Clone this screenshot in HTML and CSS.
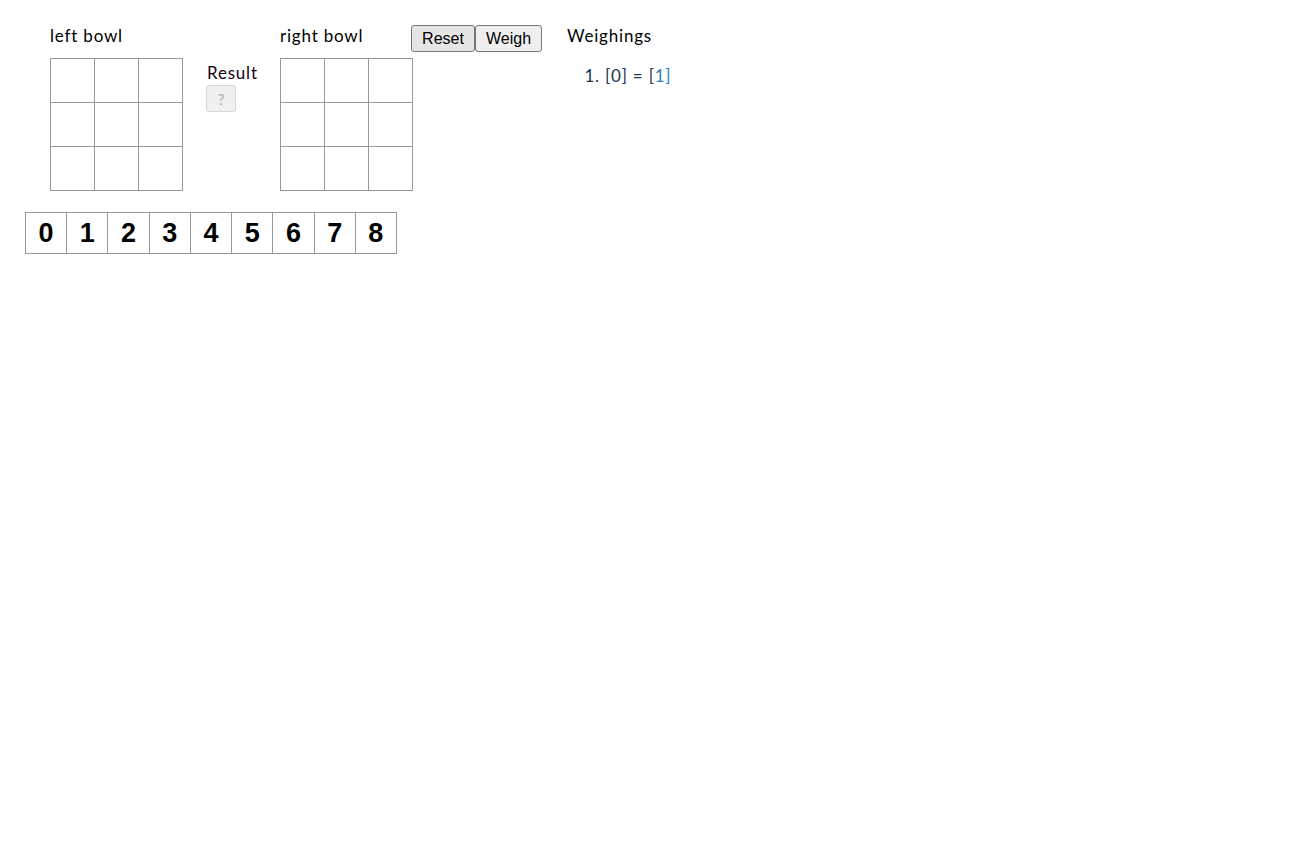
FILE: index.html
```html
<!DOCTYPE html>
<html>
<head>
<meta charset="utf-8">
<link rel="stylesheet" href="styles.css">
</head>
<body>
<div class="page">
  <div class="top">
    <div class="bowl">
      <div class="label">left bowl</div>
      <div class="grid">
        <div class="cell"></div><div class="cell"></div><div class="cell"></div>
        <div class="cell"></div><div class="cell"></div><div class="cell"></div>
        <div class="cell"></div><div class="cell"></div><div class="cell"></div>
      </div>
    </div>
    <div class="result">
      <div class="result-label">Result</div>
      <button class="qbtn" disabled>?</button>
    </div>
    <div class="bowl">
      <div class="label">right bowl</div>
      <div class="grid">
        <div class="cell"></div><div class="cell"></div><div class="cell"></div>
        <div class="cell"></div><div class="cell"></div><div class="cell"></div>
        <div class="cell"></div><div class="cell"></div><div class="cell"></div>
      </div>
    </div>
    <div class="buttons">
      <button class="btn btn-active">Reset</button><button class="btn">Weigh</button>
    </div>
    <div class="weighings">
      <div class="label">Weighings</div>
      <ol class="list">
        <li><span class="dark">[0] = [</span><span class="blue">1]</span></li>
      </ol>
    </div>
  </div>
  <div class="coins">
    <div class="coin">0</div><div class="coin">1</div><div class="coin">2</div>
    <div class="coin">3</div><div class="coin">4</div><div class="coin">5</div>
    <div class="coin">6</div><div class="coin">7</div><div class="coin">8</div>
  </div>
</div>
</body>
</html>
```

FILE: styles.css
```css
html, body {
  margin: 0;
  padding: 0;
  background: #fff;
}
body {
  font-family: "Lato", "Liberation Sans", sans-serif;
  font-size: 17px;
  letter-spacing: 0.8px;
  color: #000;
}
.page {
  padding: 25px 0 0 25px;
}
.top {
  display: flex;
  align-items: flex-start;
  padding-left: 25px;
}
.label {
  height: 22px;
  line-height: 22px;
  margin-bottom: 11px;
  white-space: nowrap;
}
.bowl {
  display: flex;
  flex-direction: column;
}
.grid {
  display: grid;
  grid-template-columns: repeat(3, 43px);
  grid-template-rows: repeat(3, 43px);
  gap: 1px;
  padding: 1px;
  background: #999;
  width: 131px;
}
.cell {
  background: #fff;
}
.result {
  display: flex;
  flex-direction: column;
  align-items: flex-start;
  width: 50px;
  margin: 37px 24px 0 23px;
}
.result-label {
  line-height: 22px;
  color: #1a0010;
  white-space: nowrap;
  padding-left: 1px;
}
.qbtn {
  width: 30px;
  height: 27px;
  margin-top: 1px;
  border: 1px solid #d8d8d8;
  border-radius: 3px;
  background: #f0f0f0;
  color: #b0b0b0;
  font-family: "Lato", sans-serif;
  font-size: 16px;
  padding: 0;
}
.buttons {
  display: flex;
  margin-left: -2px;
}
.btn {
  height: 27px;
  border: 1px solid #767676;
  border-radius: 3px;
  background: #efefef;
  font-family: "Liberation Sans", Arial, sans-serif;
  font-size: 16px;
  letter-spacing: 0;
  color: #000;
  padding: 0 9px;
  margin: 0;
}
.btn-active {
  background: #e5e5e5;
  width: 64px;
}
.btn + .btn {
  width: 67px;
}
.weighings {
  margin-left: 25px;
}
.list {
  margin: 0;
  padding: 8px 0 0 38px;
  color: #1a3550;
}
.list li {
  line-height: 20px;
}
.dark {
  color: #1a3550;
}
.blue {
  color: #2f7fc0;
}
.coins {
  display: grid;
  grid-template-columns: repeat(9, 1fr);
  gap: 1px;
  padding: 1px;
  background: #999;
  width: 370px;
  margin-top: 21px;
}
.coin {
  background: #fff;
  height: 40px;
  line-height: 40px;
  text-align: center;
  font-family: "Liberation Sans", Arial, sans-serif;
  font-weight: bold;
  font-size: 27px;
  letter-spacing: 0;
}
```
